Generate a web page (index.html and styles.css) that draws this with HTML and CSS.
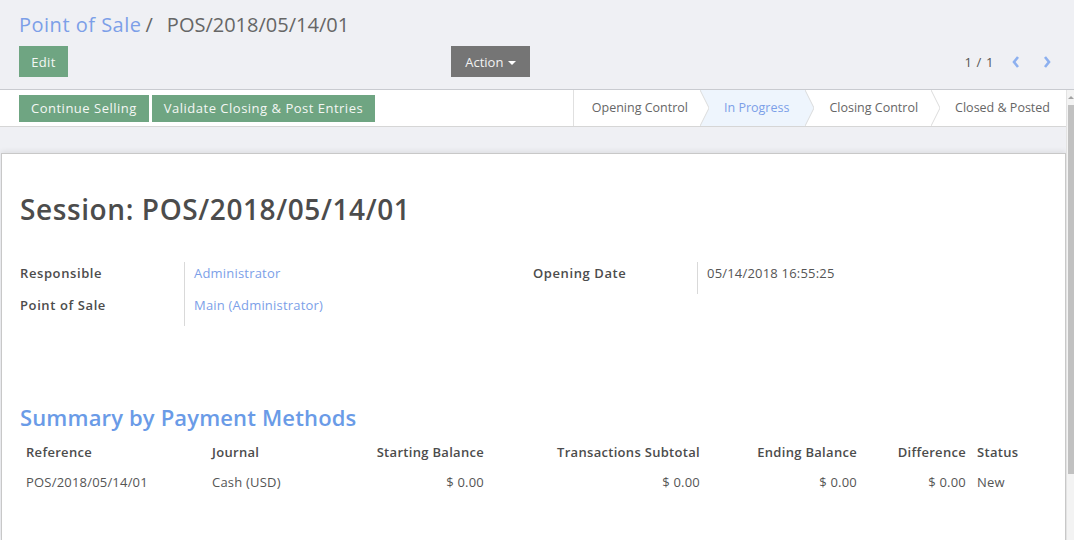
FILE: index.html
```html
<!DOCTYPE html>
<html>
<head>
<meta charset="utf-8">
<link rel="stylesheet" href="styles.css">
</head>
<body>
<div class="app">
  <div class="control-panel">
    <div class="breadcrumb"><a class="bc-link">Point of Sale</a><span class="bc-sep">/</span><span class="bc-active">POS/2018/05/14/01</span></div>
    <div class="cp-row">
      <div class="cp-left">
        <button class="btn btn-primary btn-edit">Edit</button>
        <button class="btn btn-action">Action <span class="caret"></span></button>
      </div>
      <div class="cp-right">
        <span class="pager-value">1 / 1</span>
        <svg class="pager-icon" width="10" height="14" viewBox="0 0 10 14"><polyline points="7,2 3,7 7,12" fill="none" stroke="#8db0ef" stroke-width="2.6"/></svg>
        <svg class="pager-icon" width="10" height="14" viewBox="0 0 10 14"><polyline points="3,2 7,7 3,12" fill="none" stroke="#8db0ef" stroke-width="2.6"/></svg>
      </div>
    </div>
  </div>
  <div class="content">
    <div class="scroll-body">
      <div class="statusbar">
        <div class="status-buttons">
          <button class="btn btn-primary btn-sm">Continue Selling</button>
          <button class="btn btn-primary btn-sm">Validate Closing &amp; Post Entries</button>
        </div>
        <div class="status-steps">
          <div class="step first">Opening Control</div>
          <svg class="chev" width="9" height="36" viewBox="0 0 9 36"><polyline points="0,0 9,18 0,36" fill="none" stroke="#dcdcdc" stroke-width="1"/></svg>
          <div class="step active">In Progress</div>
          <svg class="chev" width="9" height="36" viewBox="0 0 9 36"><polyline points="0,0 9,18 0,36" fill="none" stroke="#dcdcdc" stroke-width="1"/></svg>
          <div class="step">Closing Control</div>
          <svg class="chev" width="9" height="36" viewBox="0 0 9 36"><polyline points="0,0 9,18 0,36" fill="none" stroke="#dcdcdc" stroke-width="1"/></svg>
          <div class="step last">Closed &amp; Posted</div>
        </div>
      </div>
      <div class="sheet-bg">
        <div class="sheet">
          <h1 class="title">Session: POS/2018/05/14/01</h1>
          <div class="groups">
            <div class="group">
              <div class="field-row"><div class="label">Responsible</div><div class="value link">Administrator</div></div>
              <div class="field-row"><div class="label">Point of Sale</div><div class="value link">Main (Administrator)</div></div>
            </div>
            <div class="group">
              <div class="field-row"><div class="label">Opening Date</div><div class="value">05/14/2018 16:55:25</div></div>
            </div>
          </div>
          <h2 class="section-title">Summary by Payment Methods</h2>
          <table class="summary">
            <colgroup>
              <col style="width:186px"><col style="width:124px"><col style="width:160px"><col style="width:216px"><col style="width:157px"><col style="width:109px"><col>
            </colgroup>
            <thead>
              <tr><th>Reference</th><th>Journal</th><th class="num">Starting Balance</th><th class="num">Transactions Subtotal</th><th class="num">Ending Balance</th><th class="num">Difference</th><th class="status">Status</th></tr>
            </thead>
            <tbody>
              <tr><td>POS/2018/05/14/01</td><td>Cash (USD)</td><td class="num">$ 0.00</td><td class="num">$ 0.00</td><td class="num">$ 0.00</td><td class="num">$ 0.00</td><td class="status">New</td></tr>
            </tbody>
          </table>
        </div>
      </div>
    </div>
    <div class="scrollbar">
      <div class="sb-arrow"></div>
      <div class="sb-thumb"></div>
    </div>
  </div>
</div>
</body>
</html>
```
FILE: styles.css
```css
* { box-sizing: border-box; }
html, body { margin: 0; padding: 0; }
body {
  width: 1074px;
  height: 540px;
  overflow: hidden;
  font-family: "Open Sans", "Noto Sans", sans-serif;
  font-size: 13px;
  color: #4c4c4c;
  background: #eff0f4;
}
.app { display: flex; flex-direction: column; height: 540px; }

.control-panel {
  height: 90px;
  background: #eff0f4;
  border-bottom: 1px solid #c9cbd0;
  padding: 9px 22px 0 19px;
  flex: none;
}
.breadcrumb {
  font-size: 20px;
  line-height: 32px;
  height: 30px;
  white-space: nowrap;
}
.bc-link { color: #7c9fe8; letter-spacing: 0.5px; }
.bc-sep { color: #666; margin: 0 14px 0 4px; }
.bc-active { color: #666; }

.cp-row {
  display: grid;
  grid-template-columns: 511px 1fr;
  margin-top: 7px;
  height: 31px;
}
.cp-left { display: flex; justify-content: space-between; }
.cp-right { display: flex; justify-content: flex-end; align-items: center; }

.btn {
  font-family: inherit;
  border: none;
  border-radius: 0;
  cursor: pointer;
  padding: 0 12px;
  height: 31px;
  font-size: 13px;
  color: #fff;
}
.btn-primary { background: #6fa582; color: #f4f7f4; }
.btn-edit { width: 49px; padding: 0; letter-spacing: 0.3px; }
.btn-action { background: #757575; width: 79px; padding: 0; color: #f2f2f2; }
.caret {
  display: inline-block;
  width: 0; height: 0;
  border-left: 4px solid transparent;
  border-right: 4px solid transparent;
  border-top: 4px solid #fff;
  vertical-align: middle;
  margin-left: 1px;
}
.pager-value { color: #555; margin-right: 17px; letter-spacing: 0.6px; }
.pager-icon + .pager-icon { margin-left: 21px; }

.content { flex: 1; display: flex; min-height: 0; }
.scroll-body { flex: 1; display: flex; flex-direction: column; overflow: hidden; }

.statusbar {
  height: 37px;
  background: #fff;
  border-bottom: 1px solid #d6d6d6;
  display: flex;
  justify-content: space-between;
  align-items: stretch;
  padding-left: 19px;
  flex: none;
}
.status-buttons { display: flex; gap: 3px; padding-top: 5px; }
.btn-sm { height: 27px; padding: 0 12px 1px; letter-spacing: 0.5px; }
.status-steps { display: flex; align-items: stretch; height: 36px; }
.step {
  display: flex;
  align-items: center;
  padding: 0 13px 1px 15px;
  color: #666;
  font-size: 12.5px;
  white-space: nowrap;
}
.step.first { border-left: 1px solid #e0e0e0; padding-left: 18px; padding-right: 12px; }
.step.last { padding-right: 16px; }
.step.active {
  color: #7c9fe8;
  background: #eef5fd;
  margin: 0 -9px;
  padding: 0 25px 1px 24px;
  clip-path: polygon(0 0, calc(100% - 9px) 0, 100% 50%, calc(100% - 9px) 100%, 0 100%, 9px 50%);
}
.chev { position: relative; z-index: 1; flex: none; }

.sheet-bg {
  flex: 1;
  background: #eff0f4;
  padding: 26px 0 0 1px;
}
.sheet {
  background: #fff;
  border: 1px solid #c8c8c8;
  border-bottom: none;
  height: 100%;
  padding: 38px 19px 0 18px;
  box-shadow: 0 -2px 5px rgba(0, 0, 0, 0.07);
}
.title {
  margin: 0;
  font-size: 28px;
  line-height: 34px;
  font-weight: 600;
  color: #4c4c4c;
  letter-spacing: 0.6px;
}
.groups {
  display: grid;
  grid-template-columns: 513px 1fr;
  margin-top: 36px;
}
.group { display: flex; flex-direction: column; }
.field-row { display: grid; grid-template-columns: 165px 1fr; height: 32px; }
.label {
  font-weight: 600;
  color: #4c4c4c;
  border-right: 1px solid #d9d9d9;
  line-height: 20px;
  padding-top: 1px;
  letter-spacing: 0.6px;
}
.value { padding-left: 9px; padding-top: 1px; color: #555; line-height: 20px; letter-spacing: 0.2px; }
.value.link { color: #7c9fe8; }

.section-title {
  margin: 77px 0 0 0;
  font-size: 22px;
  line-height: 28px;
  font-weight: 600;
  color: #6a9be7;
  letter-spacing: 0.15px;
}
.summary {
  border-collapse: collapse;
  table-layout: fixed;
  width: 1026px;
  margin-top: 6px;
}
.summary th, .summary td {
  padding: 0 6px;
  height: 30px;
  text-align: left;
  white-space: nowrap;
  font-size: 13px;
  letter-spacing: 0.2px;
}
.summary th { font-weight: 600; color: #4c4c4c; letter-spacing: 0.3px; }
.summary td { color: #555; }
.summary .num { text-align: right; }
.summary .status { padding-left: 5px; }

.scrollbar {
  width: 8px;
  flex: none;
  background: #f3f3f3;
  border-left: 1px solid #e3e3e3;
  display: flex;
  flex-direction: column;
  align-items: center;
}
.sb-arrow {
  margin-top: 6px;
  width: 0; height: 0;
  border-left: 3px solid transparent;
  border-right: 3px solid transparent;
  border-bottom: 3px solid #a3a3a3;
}
.sb-thumb {
  margin-top: 6px;
  width: 6px;
  height: 369px;
  background: #c1c1c1;
}
```
